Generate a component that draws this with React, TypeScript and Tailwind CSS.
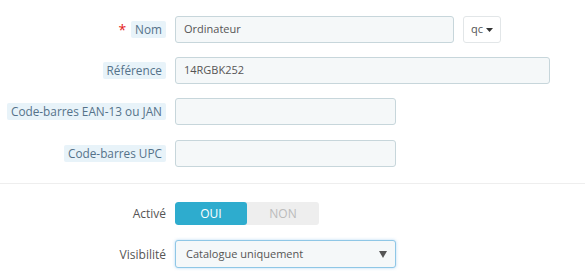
const font = { fontFamily: '"Open Sans", "Liberation Sans", sans-serif' };

function Label({ text, tip = true, required = false }: { text: string; tip?: boolean; required?: boolean }) {
  return (
    <div className="flex w-[166px] shrink-0 items-center justify-end">
      {required && <span className="mr-[5px] text-[14px] leading-none text-[#e41b1b]">*</span>}
      {tip ? (
        <span className="rounded-[2px] bg-[#e8f3f9] px-[4px] text-[11.8px] leading-[17px] text-[#557289]">{text}</span>
      ) : (
        <span className="text-[12px] leading-[17px] text-[#555]">{text}</span>
      )}
    </div>
  );
}

function Input({ value = "", width }: { value?: string; width: string }) {
  return (
    <div
      className={`${width} flex h-[27px] items-center rounded-[3px] border border-[#c7d6db] bg-[#f5f8f9] px-[8px] text-[11px] text-[#555]`}
    >
      {value}
    </div>
  );
}

export default function App() {
  return (
    <div className="h-[275px] w-[585px] bg-white pt-[16px]" style={font}>
      <div className="flex items-center">
        <Label text="Nom" required />
        <div className="ml-[9px] flex items-center">
          <Input value="Ordinateur" width="w-[279px]" />
          <button className="ml-[9px] flex h-[27px] w-[38px] items-center justify-center gap-[3px] rounded-[3px] border border-[#e2e6e8] bg-white text-[11px] text-[#555]">
            qc
            <svg width="7" height="4" viewBox="0 0 7 4">
              <path d="M0 0h7L3.5 4z" fill="#333" />
            </svg>
          </button>
        </div>
      </div>

      <div className="mt-[14px] flex items-center">
        <Label text="Référence" />
        <div className="ml-[9px]">
          <Input value="14RGBK252" width="w-[375px]" />
        </div>
      </div>

      <div className="mt-[14px] flex items-center">
        <Label text="Code-barres EAN-13 ou JAN" />
        <div className="ml-[9px]">
          <Input width="w-[221px]" />
        </div>
      </div>

      <div className="mt-[15px] flex items-center">
        <Label text="Code-barres UPC" />
        <div className="ml-[9px]">
          <Input width="w-[221px]" />
        </div>
      </div>

      <div className="mt-[16px] h-px w-full bg-[#eee]" />

      <div className="mt-[18px] flex items-center">
        <Label text="Activé" tip={false} />
        <div className="ml-[9px] flex h-[23px] w-[144px] overflow-hidden rounded-[3px] bg-[#eee] text-[12px]">
          <div className="flex w-[72px] items-center justify-center rounded-[3px] bg-[#2eacce] text-white">OUI</div>
          <div className="flex flex-1 items-center justify-center text-[#bbb]">NON</div>
        </div>
      </div>

      <div className="mt-[15px] flex items-center">
        <Label text="Visibilité" tip={false} />
        <div className="ml-[9px] flex h-[28px] w-[221px] items-center justify-between rounded-[3px] border border-[#8fc7e6] bg-[#f5f8f9] pl-[10px] pr-[8px] text-[11px] text-[#555] shadow-[0_0_3px_rgba(102,175,233,0.5)]">
          <span>Catalogue uniquement</span>
          <svg width="8" height="7" viewBox="0 0 8 7">
            <path d="M0 0h8L4 7z" fill="#555" />
          </svg>
        </div>
      </div>
    </div>
  );
}
